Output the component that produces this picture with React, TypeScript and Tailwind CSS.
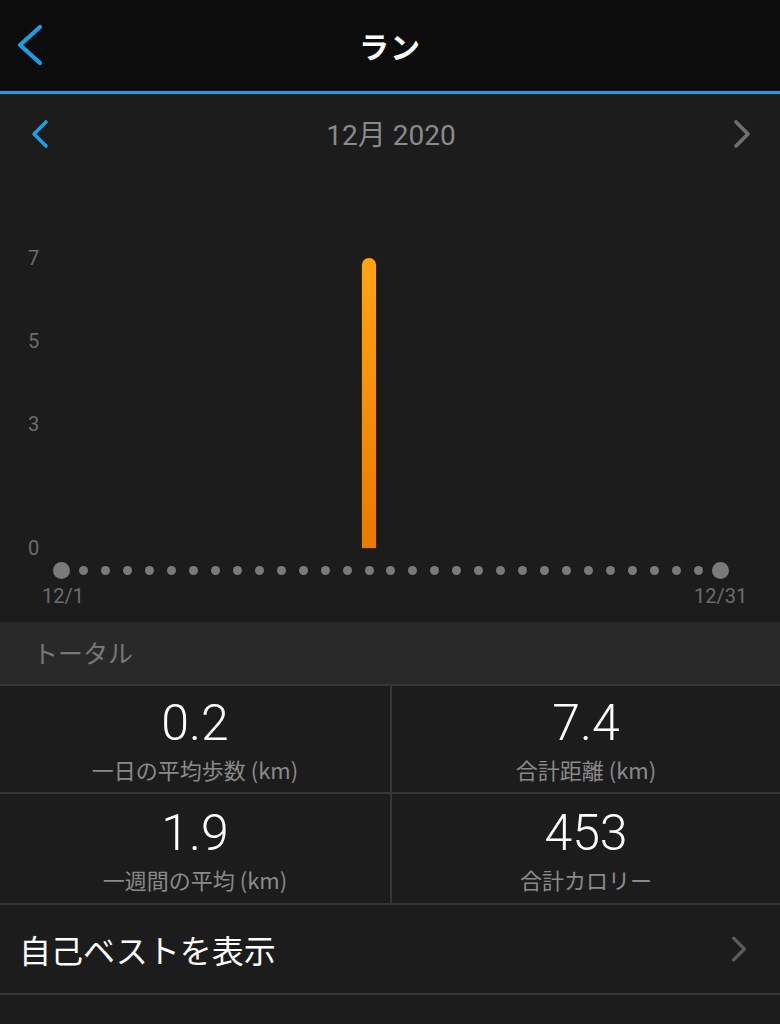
import React from "react";

const JP = { fontFamily: '"Noto Sans CJK JP", "Noto Sans", sans-serif' };
const NUM = { fontFamily: 'Roboto, "Noto Sans CJK JP", sans-serif' };

function Chevron({ dir, className, stroke }: { dir: "l" | "r"; className: string; stroke: string }) {
  return (
    <svg viewBox="0 0 20 30" className={className} fill="none">
      <polyline
        points={dir === "l" ? "16,3 4,15 16,27" : "4,3 16,15 4,27"}
        stroke={stroke}
        strokeWidth="3.6"
        strokeLinecap="round"
        strokeLinejoin="round"
      />
    </svg>
  );
}

const days = Array.from({ length: 31 }, (_, i) => i);

function Stat({ value, label, right }: { value: string; label: string; right?: boolean }) {
  return (
    <div className={`flex flex-col items-center justify-center ${right ? "" : "border-r-2 border-[#363636]"}`}>
      <div className="text-[50px] leading-none text-white font-light" style={NUM}>{value}</div>
      <div className="text-[22px] text-[#8a8a8a] mt-[10px] leading-none" style={JP}>{label}</div>
    </div>
  );
}

export default function App() {
  return (
    <div className="w-[780px] h-[1024px] bg-[#1c1c1c] overflow-hidden flex flex-col" style={JP}>
      {/* Header */}
      <div className="relative h-[91px] bg-[#0c0c0c] flex items-center justify-center shrink-0">
        <svg viewBox="0 0 30 44" className="absolute left-[14px] top-[24px] w-[30px] h-[44px]" fill="none">
          <polyline points="26,3 6,21 26,39" stroke="#1b9fe2" strokeWidth="4.2" strokeLinecap="round" strokeLinejoin="round" />
        </svg>
        <div className="text-white text-[30px] font-bold tracking-[1px]">ラン</div>
      </div>
      <div className="h-[3px] bg-[#1b9fe2] shrink-0" />

      {/* Month nav */}
      <div className="h-[80px] flex items-center justify-between px-[30px] shrink-0">
        <Chevron dir="l" className="w-[20px] h-[30px]" stroke="#1b9fe2" />
        <div className="text-[28px] text-[#8a8a8a]" style={NUM}>
          12<span style={JP}>月</span> 2020
        </div>
        <Chevron dir="r" className="w-[20px] h-[30px] mr-[-2px]" stroke="#707070" />
      </div>

      {/* Chart */}
      <div className="relative h-[448px] shrink-0" style={NUM}>
        {[
          ["7", 84],
          ["5", 167],
          ["3", 250],
          ["0", 374],
        ].map(([t, y]) => (
          <div
            key={t as string}
            className="absolute left-[28px] text-[20px] leading-none text-[#6c6c6c] -translate-y-1/2"
            style={{ top: y as number }}
          >
            {t}
          </div>
        ))}
        {/* bar */}
        <div className="absolute left-[361px] top-[83px] w-[16px] h-[292px] rounded-t-full bg-gradient-to-b from-[#ffa416] to-[#ea7902] border border-[#3a2200]" />
        {/* dots */}
        <div className="absolute left-[51px] top-[388px] w-[680px] h-[16px] grid grid-cols-[repeat(31,minmax(0,1fr))] items-center">
          {days.map((d) => (
            <div key={d} className="flex justify-center">
              <div
                className={
                  d === 0 || d === 30
                    ? "w-[17px] h-[17px] rounded-full bg-[#7a7a7a]"
                    : "w-[9px] h-[9px] rounded-full bg-[#7a7a7a]"
                }
              />
            </div>
          ))}
        </div>
        <div className="absolute left-[42px] top-[412px] text-[20px] leading-none text-[#6c6c6c]">12/1</div>
        <div className="absolute left-[694px] top-[412px] text-[20px] leading-none text-[#6c6c6c]">12/31</div>
      </div>

      {/* Section header */}
      <div className="h-[62px] bg-[#292929] flex items-center px-[33px] shrink-0">
        <div className="text-[25px] text-[#787878]">トータル</div>
      </div>

      {/* Stats grid */}
      <div className="border-t-2 border-[#363636] flex flex-col shrink-0">
        <div className="grid grid-cols-[392px_1fr] h-[108px] border-b-2 border-[#363636]">
          <Stat value="0.2" label="一日の平均歩数 (km)" />
          <Stat value="7.4" label="合計距離 (km)" right />
        </div>
        <div className="grid grid-cols-[392px_1fr] h-[111px] border-b-2 border-[#363636]">
          <Stat value="1.9" label="一週間の平均 (km)" />
          <Stat value="453" label="合計カロリー" right />
        </div>
      </div>

      {/* Personal best row */}
      <div className="h-[90px] flex items-center justify-between pl-[19px] pr-[32px] border-b-2 border-[#363636] shrink-0">
        <div className="text-[32px] text-white">自己ベストを表示</div>
        <Chevron dir="r" className="w-[18px] h-[28px]" stroke="#5c5c5c" />
      </div>
    </div>
  );
}
